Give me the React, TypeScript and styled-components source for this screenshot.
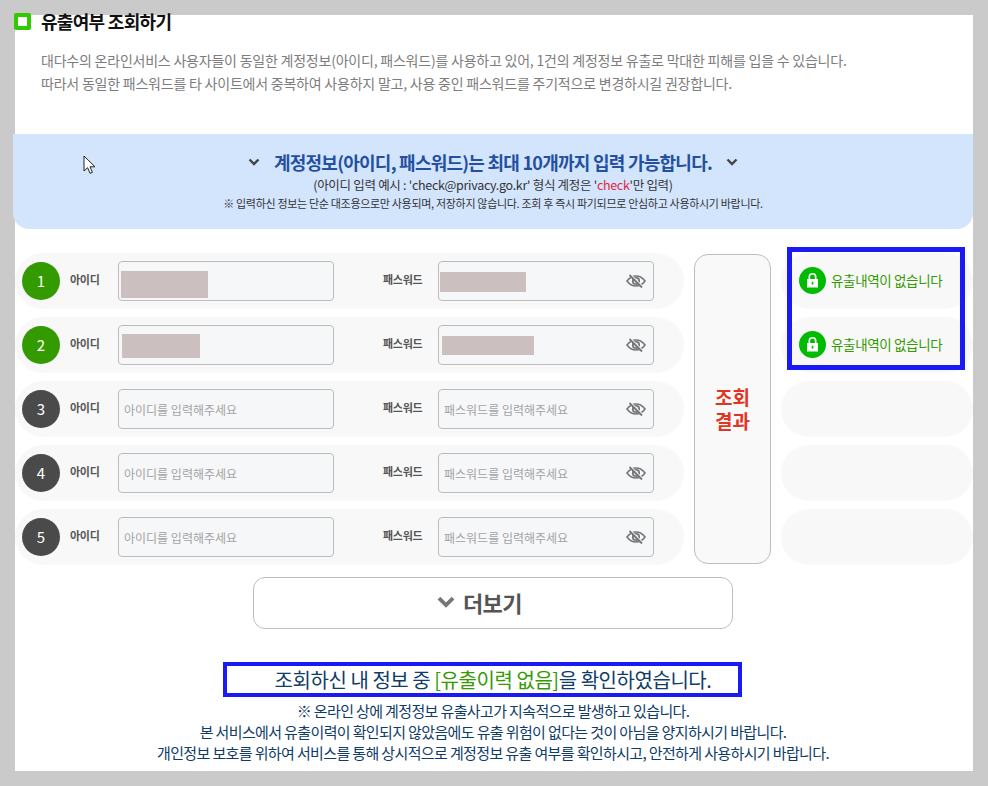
import React from 'react';
import styled, { createGlobalStyle } from 'styled-components';

const GlobalStyle = createGlobalStyle`
  html, body {
    margin: 0;
    padding: 0;
    background: #cacaca;
  }
  * {
    box-sizing: border-box;
  }
`;

const Page = styled.div`
  position: relative;
  width: 988px;
  height: 786px;
  padding: 15px;
  font-family: 'Noto Sans CJK KR', 'Noto Sans', sans-serif;
  overflow: hidden;
`;

const Panel = styled.div`
  display: flow-root;
  width: 958px;
  height: 756px;
  background: #fff;
`;

const TitleRow = styled.div`
  display: flex;
  align-items: center;
  gap: 10px;
  height: 24px;
  margin: -6px 0 0 -1px;
`;

const TitleMark = styled.span`
  width: 17px;
  height: 17px;
  border: 4px solid #2fcb00;
  border-radius: 2px;
  background: #fff;
`;

const Title = styled.h2`
  margin: 0;
  font-size: 18px;
  font-weight: 700;
  letter-spacing: -0.7px;
  color: #111;
`;

const Intro = styled.p`
  margin: 16px 0 0 26px;
  font-size: 14px;
  line-height: 23px;
  letter-spacing: -0.22px;
  color: #7d7d7d;
`;

const Notice = styled.div`
  position: relative;
  height: 95px;
  margin: 39px 0 0 -2px;
  padding-top: 15px;
  background: #d3e5fd;
  border-radius: 0 0 16px 16px;
  text-align: center;
`;

const NoticeHead = styled.div`
  display: flex;
  justify-content: center;
  align-items: center;
  gap: 13px;
  height: 26px;
  font-size: 18px;
  font-weight: 700;
  letter-spacing: -0.75px;
  color: #24509f;
`;

const NoticeExample = styled.div`
  margin-top: 1px;
  font-size: 12.5px;
  line-height: 18px;
  letter-spacing: -0.3px;
  color: #333;
  em {
    font-style: normal;
    color: #e5263c;
  }
`;

const NoticeSmall = styled.div`
  font-size: 11px;
  line-height: 18px;
  letter-spacing: -0.31px;
  color: #333;
`;

const Cursor = styled.svg`
  position: absolute;
  left: 70px;
  top: 21px;
`;

const Board = styled.div`
  display: grid;
  grid-template-columns: 669px 77px 192px;
  column-gap: 10px;
  margin-top: 24px;
`;

const Rows = styled.div`
  display: flex;
  flex-direction: column;
  gap: 8px;
`;

const Row = styled.div`
  display: flex;
  align-items: center;
  height: 56px;
  padding-left: 7px;
  background: #f8f8f8;
  border-radius: 28px;
`;

const Num = styled.span<{ $active: boolean }>`
  display: flex;
  align-items: center;
  justify-content: center;
  flex: none;
  width: 38px;
  height: 38px;
  padding-bottom: 2px;
  border-radius: 50%;
  background: ${(p) => (p.$active ? '#339a00' : '#4a4a4a')};
  color: #fff;
  font-size: 15px;
`;

const Label = styled.label<{ $width: number; $indent: number }>`
  flex: none;
  width: ${(p) => p.$width}px;
  margin-top: -4px;
  padding-left: ${(p) => p.$indent}px;
  font-size: 11px;
  font-weight: 700;
  letter-spacing: -0.3px;
  color: #555;
`;

const Field = styled.div`
  position: relative;
  flex: none;
  width: 216px;
  height: 40px;
`;

const FieldInput = styled.input`
  display: block;
  width: 100%;
  height: 100%;
  padding: 0 30px 0 5px;
  background: #f6f7f9;
  border: 1px solid #bdbdbd;
  border-radius: 4px;
  font-family: inherit;
  font-size: 12px;
  &::placeholder {
    color: #a3a3a3;
    opacity: 1;
  }
`;

const Masked = styled.span<{ $left: number; $top: number; $w: number; $h: number }>`
  position: absolute;
  left: ${(p) => p.$left}px;
  top: ${(p) => p.$top}px;
  width: ${(p) => p.$w}px;
  height: ${(p) => p.$h}px;
  background: #cbbfbf;
`;

const EyeToggle = styled.svg`
  position: absolute;
  right: 8px;
  top: 11px;
`;

const ResultButton = styled.div`
  display: flex;
  align-items: center;
  justify-content: center;
  height: 310px;
  margin-top: 1px;
  background: #f9f9f9;
  border: 1px solid #bdbdbd;
  border-radius: 14px;
  font-size: 19px;
  font-weight: 700;
  line-height: 24px;
  text-align: center;
  color: #e03524;
`;

const ResultRow = styled.div`
  display: flex;
  align-items: center;
  gap: 5px;
  height: 56px;
  padding-left: 18px;
  background: #f8f8f8;
  border-radius: 28px;
`;

const LockBadge = styled.span`
  display: flex;
  align-items: center;
  justify-content: center;
  width: 27px;
  height: 27px;
  margin-top: -2px;
  border-radius: 50%;
  background: #00bb00;
`;

const ResultText = styled.span`
  margin-top: -2px;
  font-size: 13.5px;
  letter-spacing: -0.35px;
  color: #339a00;
`;

const MoreButton = styled.div`
  display: flex;
  align-items: center;
  justify-content: center;
  gap: 6px;
  width: 480px;
  height: 52px;
  margin: 12px 0 0 238px;
  padding: 0 29px 2px 0;
  background: #fff;
  border: 1px solid #bdbdbd;
  border-radius: 12px;
  font-size: 22px;
  font-weight: 700;
  letter-spacing: -0.5px;
  color: #555;
`;

const Summary = styled.div`
  height: 28px;
  margin-top: 37px;
  padding-right: 2px;
  text-align: center;
  font-size: 20px;
  line-height: 28px;
  letter-spacing: -0.45px;
  color: #0f3c68;
  em {
    font-style: normal;
    color: #339a00;
  }
`;

const Warning = styled.div`
  margin-top: 6px;
  padding-right: 2px;
  text-align: center;
  font-size: 15px;
  line-height: 21px;
  letter-spacing: -0.63px;
  color: #0f3c68;
`;

const Highlight = styled.div<{ $x: number; $y: number; $w: number; $h: number; $line: number }>`
  position: absolute;
  left: ${(p) => p.$x}px;
  top: ${(p) => p.$y}px;
  width: ${(p) => p.$w}px;
  height: ${(p) => p.$h}px;
  border: ${(p) => p.$line}px solid #1a1af5;
  pointer-events: none;
`;

function Chevron({ size = 14, color = '#444' }: { size?: number; color?: string }) {
  return (
    <svg width={size} height={size} viewBox="0 0 14 14" fill="none">
      <path d="M2.5 4.5 7 9l4.5-4.5" stroke={color} strokeWidth="2.4" />
    </svg>
  );
}

function EyeOff() {
  return (
    <EyeToggle width="20" height="18" viewBox="0 0 20 18" fill="none" stroke="#777">
      <path d="M1 9c2.500-3.400 5.500-5 9-5s6.500 1.600 9 5c-2.500 3.400-5.500 5-9 5s-6.500-1.600-9-5z" strokeWidth="1.600" />
      <circle cx="10" cy="9" r="3.200" strokeWidth="1.800" />
      <path d="M4.500 2.500 17 15" stroke="#f6f7f9" strokeWidth="1.600" />
      <path d="M3.500 3 16 15.500" strokeWidth="1.800" />
    </EyeToggle>
  );
}

function Lock() {
  return (
    <svg width="15" height="17" viewBox="0 0 15 17">
      <path d="M4.300 8V5a3.200 3.200 0 0 1 6.400 0v3" fill="none" stroke="#fff" strokeWidth="1.600" />
      <path d="M2 7h11v8.500H2z" fill="#fff" />
      <path d="M6.700 9.800h1.600v2.800H6.700z" fill="#00bb00" />
    </svg>
  );
}

const accounts = [
  { id: 1, active: true, mask: { left: 3, top: 10, w: 87, h: 27 }, passMask: { left: 2, top: 11, w: 86, h: 20 } },
  { id: 2, active: true, mask: { left: 4, top: 9, w: 78, h: 24 }, passMask: { left: 4, top: 11, w: 92, h: 19 } },
  { id: 3, active: false },
  { id: 4, active: false },
  { id: 5, active: false },
];

export default function App() {
  return (
    <Page>
      <GlobalStyle />
      <Panel>
        <TitleRow>
          <TitleMark />
          <Title>유출여부 조회하기</Title>
        </TitleRow>
        <Intro>
          대다수의 온라인서비스 사용자들이 동일한 계정정보(아이디, 패스워드)를 사용하고 있어, 1건의 계정정보 유출로 막대한 피해를 입을 수 있습니다.
          <br />
          따라서 동일한 패스워드를 타 사이트에서 중복하여 사용하지 말고, 사용 중인 패스워드를 주기적으로 변경하시길 권장합니다.
        </Intro>
        <Notice>
          <Cursor width="14" height="20" viewBox="0 0 14 20">
            <path d="M1 1v15l3.600-3.300 2.400 5.600 2.400-1-2.400-5.500h5z" fill="#fff" stroke="#222" strokeWidth="1" />
          </Cursor>
          <NoticeHead>
            <Chevron />
            계정정보(아이디, 패스워드)는 최대 10개까지 입력 가능합니다.
            <Chevron />
          </NoticeHead>
          <NoticeExample>
            (아이디 입력 예시 : &apos;check@privacy.go.kr&apos; 형식 계정은 &apos;
            <em>check</em>
            &apos;만 입력)
          </NoticeExample>
          <NoticeSmall>
            ※ 입력하신 정보는 단순 대조용으로만 사용되며, 저장하지 않습니다. 조회 후 즉시 파기되므로 안심하고 사용하시기 바랍니다.
          </NoticeSmall>
        </Notice>
        <Board>
          <Rows>
            {accounts.map((a) => (
              <Row key={a.id}>
                <Num $active={a.active}>{a.id}</Num>
                <Label $width={58} $indent={10}>아이디</Label>
                <Field>
                  <FieldInput placeholder={a.active ? '' : '아이디를 입력해주세요'} />
                  {a.mask && <Masked $left={a.mask.left} $top={a.mask.top} $w={a.mask.w} $h={a.mask.h} />}
                </Field>
                <Label $width={104} $indent={49}>패스워드</Label>
                <Field>
                  <FieldInput placeholder={a.active ? '' : '패스워드를 입력해주세요'} />
                  {a.passMask && (
                    <Masked $left={a.passMask.left} $top={a.passMask.top} $w={a.passMask.w} $h={a.passMask.h} />
                  )}
                  <EyeOff />
                </Field>
              </Row>
            ))}
          </Rows>
          <ResultButton>
            조회
            <br />
            결과
          </ResultButton>
          <Rows>
            {accounts.map((a) => (
              <ResultRow key={a.id}>
                {a.active && (
                  <>
                    <LockBadge><Lock /></LockBadge>
                    <ResultText>유출내역이 없습니다</ResultText>
                  </>
                )}
              </ResultRow>
            ))}
          </Rows>
        </Board>
        <MoreButton>
          <Chevron size={22} color="#777" />
          더보기
        </MoreButton>
        <Summary>
          조회하신 내 정보 중 <em>[유출이력 없음]</em>을 확인하였습니다.
        </Summary>
        <Warning>
          ※ 온라인 상에 계정정보 유출사고가 지속적으로 발생하고 있습니다.
          <br />
          본 서비스에서 유출이력이 확인되지 않았음에도 유출 위험이 없다는 것이 아님을 양지하시기 바랍니다.
          <br />
          개인정보 보호를 위하여 서비스를 통해 상시적으로 계정정보 유출 여부를 확인하시고, 안전하게 사용하시기 바랍니다.
        </Warning>
      </Panel>
      <Highlight $x={787} $y={247} $w={178} $h={123} $line={5} />
      <Highlight $x={223} $y={662} $w={519} $h={35} $line={4} />
    </Page>
  );
}
